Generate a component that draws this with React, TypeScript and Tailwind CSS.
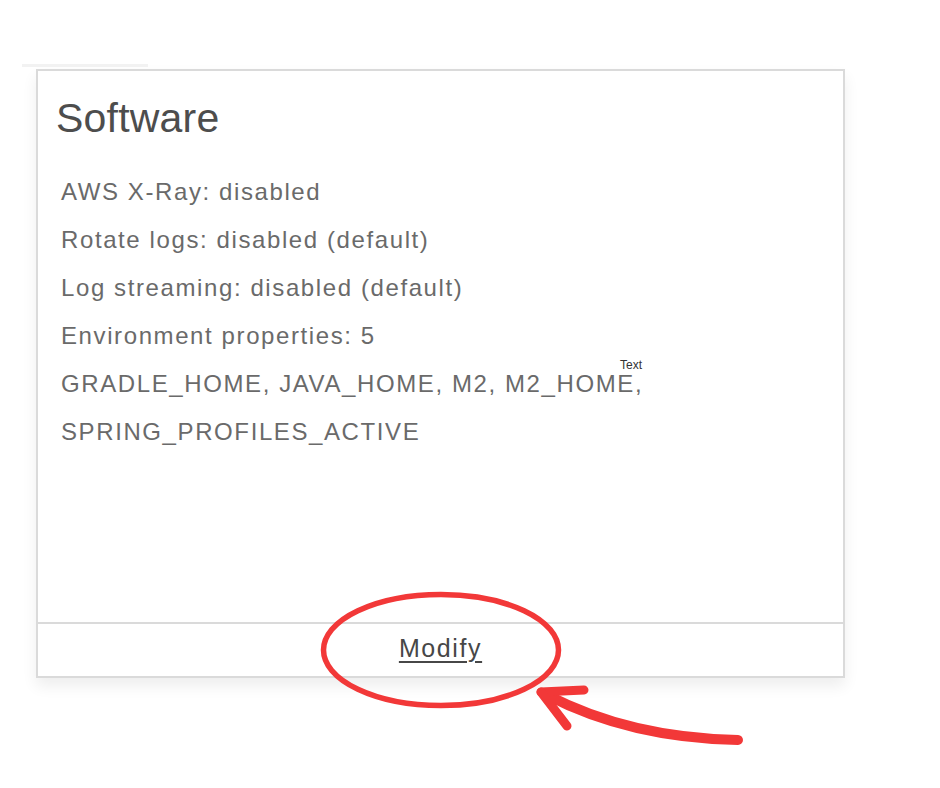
import React from "react";

const lines = [
  "AWS X-Ray: disabled",
  "Rotate logs: disabled (default)",
  "Log streaming: disabled (default)",
  "Environment properties: 5",
  "GRADLE_HOME, JAVA_HOME, M2, M2_HOME,",
  "SPRING_PROFILES_ACTIVE",
];

const App: React.FC = () => {
  return (
    <div
      className="relative w-[940px] h-[788px] bg-white overflow-hidden"
      style={{ fontFamily: '"Liberation Sans", Arial, sans-serif' }}
    >
      {/* faint tab edge left over above the card */}
      <div className="absolute left-[22px] top-[64px] w-[126px] h-[3px] bg-[#f2f2f2]" />

      <div className="ml-[36px] mt-[69px] w-[809px] h-[609px] border-2 border-[#dadada] bg-white flex flex-col shadow-[0_8px_14px_rgba(0,0,0,0.07)]">
        <div className="flex-1">
          <h2 className="mt-[23px] pl-[18px] text-[41px] leading-[48px] tracking-[0.2px] text-[#4d4d4d]">Software</h2>
          <ul className="mt-[26px] pl-[23px]">
            {lines.map((l) => (
              <li key={l} className="text-[24px] leading-[48px] tracking-[1.6px] text-[#6a6a6a]">
                {l}
              </li>
            ))}
          </ul>
        </div>
        <div className="h-[54px] border-t-2 border-[#dadada] flex items-center justify-center pb-[3px]">
          <a className="text-[25px] tracking-[1.6px] text-[#474747] underline underline-offset-[4px] decoration-[2px]">
            Modify
          </a>
        </div>
      </div>

      {/* annotation label */}
      <span className="absolute left-[620px] top-[358px] text-[12px] leading-[14px] text-[#333]">Text</span>

      {/* red hand-drawn markup */}
      <svg className="absolute inset-0 pointer-events-none" width="940" height="788" viewBox="0 0 940 788">
        <ellipse cx="441" cy="650" rx="117.5" ry="55.5" fill="none" stroke="#f23838" strokeWidth="5.5" />
        <g fill="none" stroke="#f23838" strokeLinecap="round" strokeLinejoin="round">
          <path d="M738 740 Q 630 738 547 695" strokeWidth="10" />
          <path d="M541 692 L584 690" strokeWidth="9" />
          <path d="M541 692 L567 726" strokeWidth="9" />
        </g>
      </svg>
    </div>
  );
};

export default App;
